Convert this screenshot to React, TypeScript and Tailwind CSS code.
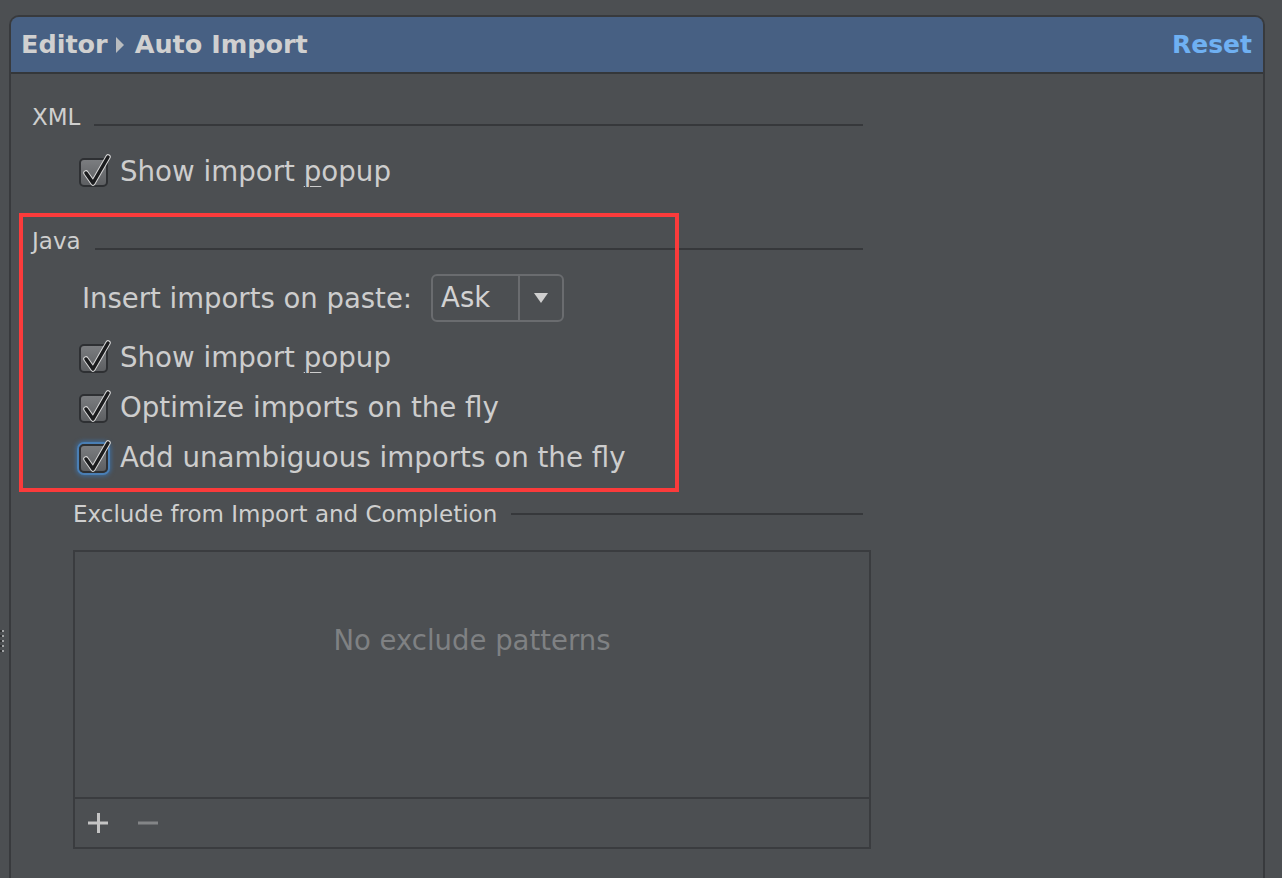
import React from "react";

const Check = ({ focused = false }: { focused?: boolean }) => (
  <div
    className={`relative w-[29px] h-[29px] rounded-[5px] border-2 border-[#2e3033] bg-gradient-to-b from-[#7b7d80] to-[#5d5f62] ${
      focused ? "shadow-[0_0_0_2px_#4a7fb5,0_0_4px_3px_#3f6c9a]" : ""
    }`}
  >
    <svg
      className="absolute -left-[2px] -top-[6px] overflow-visible"
      width="34"
      height="36"
      viewBox="0 0 34 36"
    >
      <path
        d="M7 19 L14 29 L29 3"
        fill="none"
        stroke="#d8d8d8"
        strokeWidth="5.5"
        strokeLinecap="round"
        strokeLinejoin="round"
      />
      <path
        d="M7 19 L14 29 L29 3"
        fill="none"
        stroke="#1b1c1e"
        strokeWidth="3.5"
        strokeLinecap="round"
        strokeLinejoin="round"
      />
    </svg>
  </div>
);

const CheckRow = ({
  label,
  focused,
  className = "",
}: {
  label: React.ReactNode;
  focused?: boolean;
  className?: string;
}) => (
  <div className={`flex items-center h-[36px] ml-[68px] ${className}`}>
    <Check focused={focused} />
    <span className="ml-[12px] text-[27.7px] leading-[34px] text-[#cdcdcd]">{label}</span>
  </div>
);

const Title = ({ text, className = "" }: { text: string; className?: string }) => (
  <div className={`flex items-start h-[28px] w-[831px] ml-[21px] ${className}`}>
    <span className="text-[23px] leading-[28px] text-[#cfcfcf]">{text}</span>
    <div className="flex-1 h-[2px] bg-[#36383b] mt-[21px] ml-[14px]" />
  </div>
);

const Popup = () => (
  <>
    Show import <span className="underline decoration-1 underline-offset-[5px]">p</span>opup
  </>
);

export default function App() {
  return (
    <div className="relative w-[1282px] h-[878px] overflow-hidden bg-[#4c4f52] font-['DejaVu_Sans',sans-serif]">
      {/* splitter grip */}
      <div className="absolute left-0 top-[630px] flex flex-col gap-[3px]">
        {[0, 1, 2, 3, 4].map((i) => (
          <div key={i} className="flex">
            <div className="w-[2px] h-[2px] bg-[#2f3133]" />
            <div className="w-[2px] h-[2px] bg-[#a0a2a4]" />
          </div>
        ))}
      </div>

      <div className="mt-[15px] ml-[9px] w-[1256px] h-[870px] border-2 border-b-0 border-[#383a3d] rounded-t-[10px] flex flex-col">
        {/* header */}
        <div className="h-[57px] bg-[#476083] border-b-2 border-[#34373a] rounded-t-[8px] flex items-center pl-[10px] pr-[11px]">
          <span className="text-[25.5px] font-bold text-[#d0d0d0]">Editor</span>
          <svg width="10" height="18" viewBox="0 0 10 18" className="ml-[7px] mr-[10px]">
            <path d="M1 1 L9 9 L1 17 Z" fill="#b9bcbf" />
          </svg>
          <span className="text-[25.5px] font-bold text-[#d0d0d0]">Auto Import</span>
          <span className="ml-auto text-[25px] font-bold text-[#6fb0f2]">Reset</span>
        </div>

        {/* body */}
        <div className="relative flex flex-col">
          <Title text="XML" className="mt-[29px]" />
          <CheckRow label={<Popup />} className="mt-[23px]" />

          <Title text="Java" className="mt-[37px]" />
          <div className="flex items-center h-[48px] mt-[19px] ml-[71px]">
            <span className="text-[27.5px] leading-[34px] text-[#cdcdcd]">Insert imports on paste:</span>
            <div className="ml-[19px] flex h-[48px] w-[133px] border-2 border-[#6a6c6f] rounded-[6px]">
              <div className="w-[87px] border-r-2 border-[#6a6c6f] flex items-center pl-[8px] text-[27.5px] text-[#d2d2d2]">
                Ask
              </div>
              <div className="flex-1 flex items-center justify-center">
                <svg width="16" height="12" viewBox="0 0 16 12">
                  <path d="M1 1 H15 L8 11 Z" fill="#cfcfcf" />
                </svg>
              </div>
            </div>
          </div>
          <CheckRow label={<Popup />} className="mt-[18px]" />
          <CheckRow label="Optimize imports on the fly" className="mt-[14px]" />
          <CheckRow label="Add unambiguous imports on the fly" focused className="mt-[14px]" />

          <div className="flex items-center h-[28px] w-[790px] ml-[62px] mt-[24px]">
            <span className="text-[23px] leading-[28px] text-[#cfcfcf]">Exclude from Import and Completion</span>
            <div className="flex-1 h-[2px] bg-[#36383b] ml-[14px]" />
          </div>

          <div className="ml-[62px] mt-[22px] w-[798px] h-[299px] border-2 border-[#3a3c3f] flex flex-col">
            <div className="flex-1 flex justify-center pt-[71px]">
              <span className="text-[27.5px] leading-[34px] text-[#7f8183]">No exclude patterns</span>
            </div>
            <div className="h-[50px] border-t-2 border-[#3a3c3f] flex items-center pl-[13px] gap-[30px]">
              <svg width="20" height="20" viewBox="0 0 20 20">
                <rect x="9" y="0" width="3" height="20" fill="#c4c4c4" />
                <rect x="0" y="8.5" width="20" height="3" fill="#c4c4c4" />
              </svg>
              <svg width="20" height="20" viewBox="0 0 20 20">
                <rect x="0" y="8.5" width="20" height="3" fill="#838587" />
              </svg>
            </div>
          </div>

          {/* red annotation box */}
          <div className="absolute left-[8px] top-[139px] w-[660px] h-[279px] border-4 border-[#fb3b3b] pointer-events-none" />
        </div>
      </div>
    </div>
  );
}
